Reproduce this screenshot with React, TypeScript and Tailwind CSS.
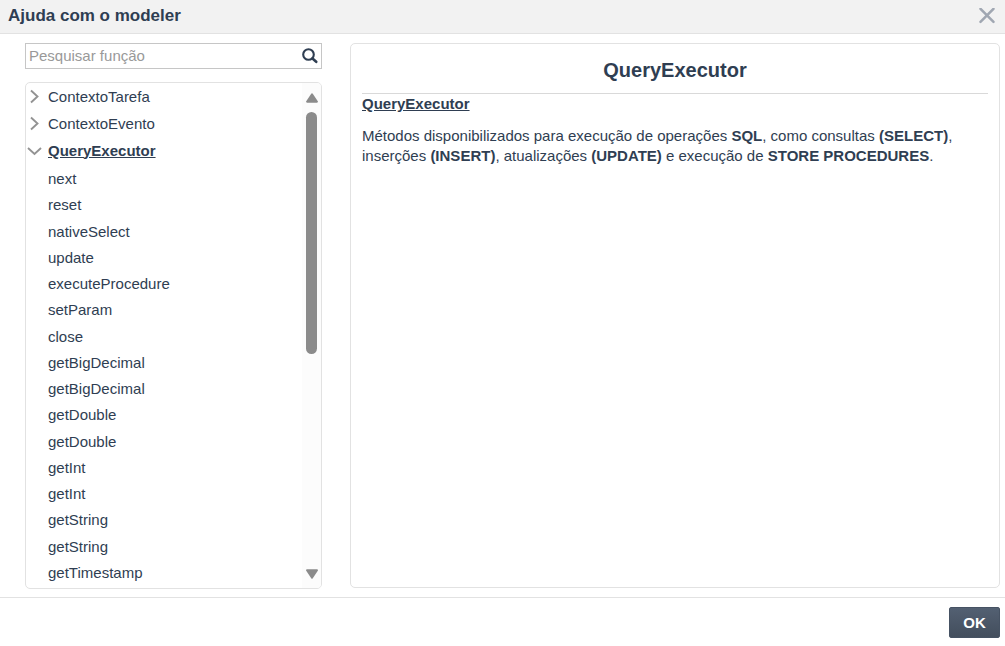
import { useState } from "react";

const methods = [
  "next",
  "reset",
  "nativeSelect",
  "update",
  "executeProcedure",
  "setParam",
  "close",
  "getBigDecimal",
  "getBigDecimal",
  "getDouble",
  "getDouble",
  "getInt",
  "getInt",
  "getString",
  "getString",
  "getTimestamp",
];

function Chevron({ open = false }: { open?: boolean }) {
  return (
    <svg
      viewBox="0 0 16 16"
      className="h-4 w-4 shrink-0"
      fill="none"
      stroke="#939393"
      strokeWidth="1.9"
      aria-hidden="true"
    >
      <path d={open ? "M2 5l6.500 6 6.500-6" : "M5 1.500l6.500 6-6.500 6"} />
    </svg>
  );
}

function Group({ name, open = false }: { name: string; open?: boolean }) {
  return (
    <button type="button" aria-expanded={open} className="flex h-[27px] w-full items-center gap-[6px] text-left">
      <Chevron open={open} />
      <span className={open ? "font-bold underline" : ""}>{name}</span>
    </button>
  );
}

function Scrollbar() {
  return (
    <div className="flex w-[19px] shrink-0 flex-col items-center bg-[#fcfcfc] pt-[10px] pb-[9px]" aria-hidden="true">
      <svg viewBox="0 0 12 10" className="h-[10px] w-3 shrink-0" fill="#8b8b8b">
        <path d="M5.2.8a1 1 0 0 1 1.6 0l5 7.500c.4.7 0 1.400-.8 1.400H1C.2 9.700-.2 9 .2 8.300z" />
      </svg>
      <div className="mt-[9px] flex w-[11px] flex-1 flex-col">
        <div className="h-[53%] rounded-full bg-[#8b8b8b]" />
      </div>
      <svg viewBox="0 0 12 10" className="h-[10px] w-3 shrink-0" fill="#8b8b8b">
        <path d="M5.2 9.200a1 1 0 0 0 1.600 0l5-7.500c.4-.7 0-1.400-.8-1.400H1C.2.3-.2 1 .2 1.700z" />
      </svg>
    </div>
  );
}

export default function App() {
  const [query, setQuery] = useState("");

  return (
    <div className="flex min-h-screen flex-col bg-white font-['Liberation_Sans',Arial,sans-serif] text-[15px] leading-5 text-[#2f3e52]">
      <header className="flex h-[34px] items-center justify-between border-b border-[#e2e2e2] bg-[#f2f2f2] pr-[10px] pb-[2px] pl-2">
        <h1 className="text-[17px] font-bold">Ajuda com o modeler</h1>
        <button type="button" aria-label="Fechar">
          <svg viewBox="0 0 16 16" className="h-4 w-4" fill="none" stroke="#a0a7b2" strokeWidth="2.500" strokeLinecap="round">
            <path d="M1.500 .8l13 13M14.500 .8l-13 13" />
          </svg>
        </button>
      </header>

      <main className="flex flex-1 gap-7 pt-[9px] pr-[5px] pb-2 pl-[25px]">
        <aside className="flex w-[297px] shrink-0 flex-col gap-[13px]">
          <form role="search" className="flex h-[26px] items-center border border-[#c6c6c6] px-[3px]">
            <input
              type="text"
              aria-label="Pesquisar função"
              placeholder="Pesquisar função"
              value={query}
              onChange={(event) => setQuery(event.target.value)}
              className="min-w-0 flex-1 outline-none placeholder:text-[#999999]"
            />
            <button type="button" aria-label="Pesquisar">
              <svg viewBox="0 0 16 16" className="h-4 w-4" fill="none" stroke="#2f3e52">
                <circle cx="6.500" cy="6.500" r="5.300" strokeWidth="2.100" />
                <path d="M10.500 10.500l3.700 3.300" strokeWidth="2.600" strokeLinecap="round" />
              </svg>
            </button>
          </form>

          <nav className="flex flex-1 overflow-hidden rounded-[5px] border border-[#e2e2e2]">
            <ul className="flex min-w-0 flex-1 flex-col">
              <li>
                <Group name="ContextoTarefa" />
              </li>
              <li>
                <Group name="ContextoEvento" />
              </li>
              <li className="flex flex-1 flex-col">
                <Group name="QueryExecutor" open />
                <ul className="flex flex-1 flex-col pt-[2px] pb-[2px]">
                  {methods.map((method, index) => (
                    <li key={index} className="flex flex-1 items-center">
                      <a href="#" className="pl-[22px]">
                        {method}
                      </a>
                    </li>
                  ))}
                </ul>
              </li>
            </ul>
            <Scrollbar />
          </nav>
        </aside>

        <article className="mb-[1px] min-w-0 flex-1 rounded-[5px] border border-[#e2e2e2] px-[11px]">
          <h2 className="flex h-[50px] items-center justify-center border-b border-[#d9d9d9] pt-[2px] text-[20px] font-bold">
            QueryExecutor
          </h2>
          <h3 className="font-bold underline">QueryExecutor</h3>
          <p className="mt-3">
            Métodos disponibilizados para execução de operações <strong>SQL</strong>, como consultas{" "}
            <strong>(SELECT)</strong>, inserções <strong>(INSERT)</strong>, atualizações <strong>(UPDATE)</strong> e
            execução de <strong>STORE PROCEDURES</strong>.
          </p>
        </article>
      </main>

      <footer className="flex h-[49px] items-start justify-end border-t border-[#e2e2e2] pt-[9px] pr-[5px]">
        <button
          type="button"
          className="h-[31px] w-[51px] rounded-[2px] border border-[#465263] bg-linear-to-b from-[#536072] to-[#434e5d] font-bold text-white"
        >
          OK
        </button>
      </footer>
    </div>
  );
}
